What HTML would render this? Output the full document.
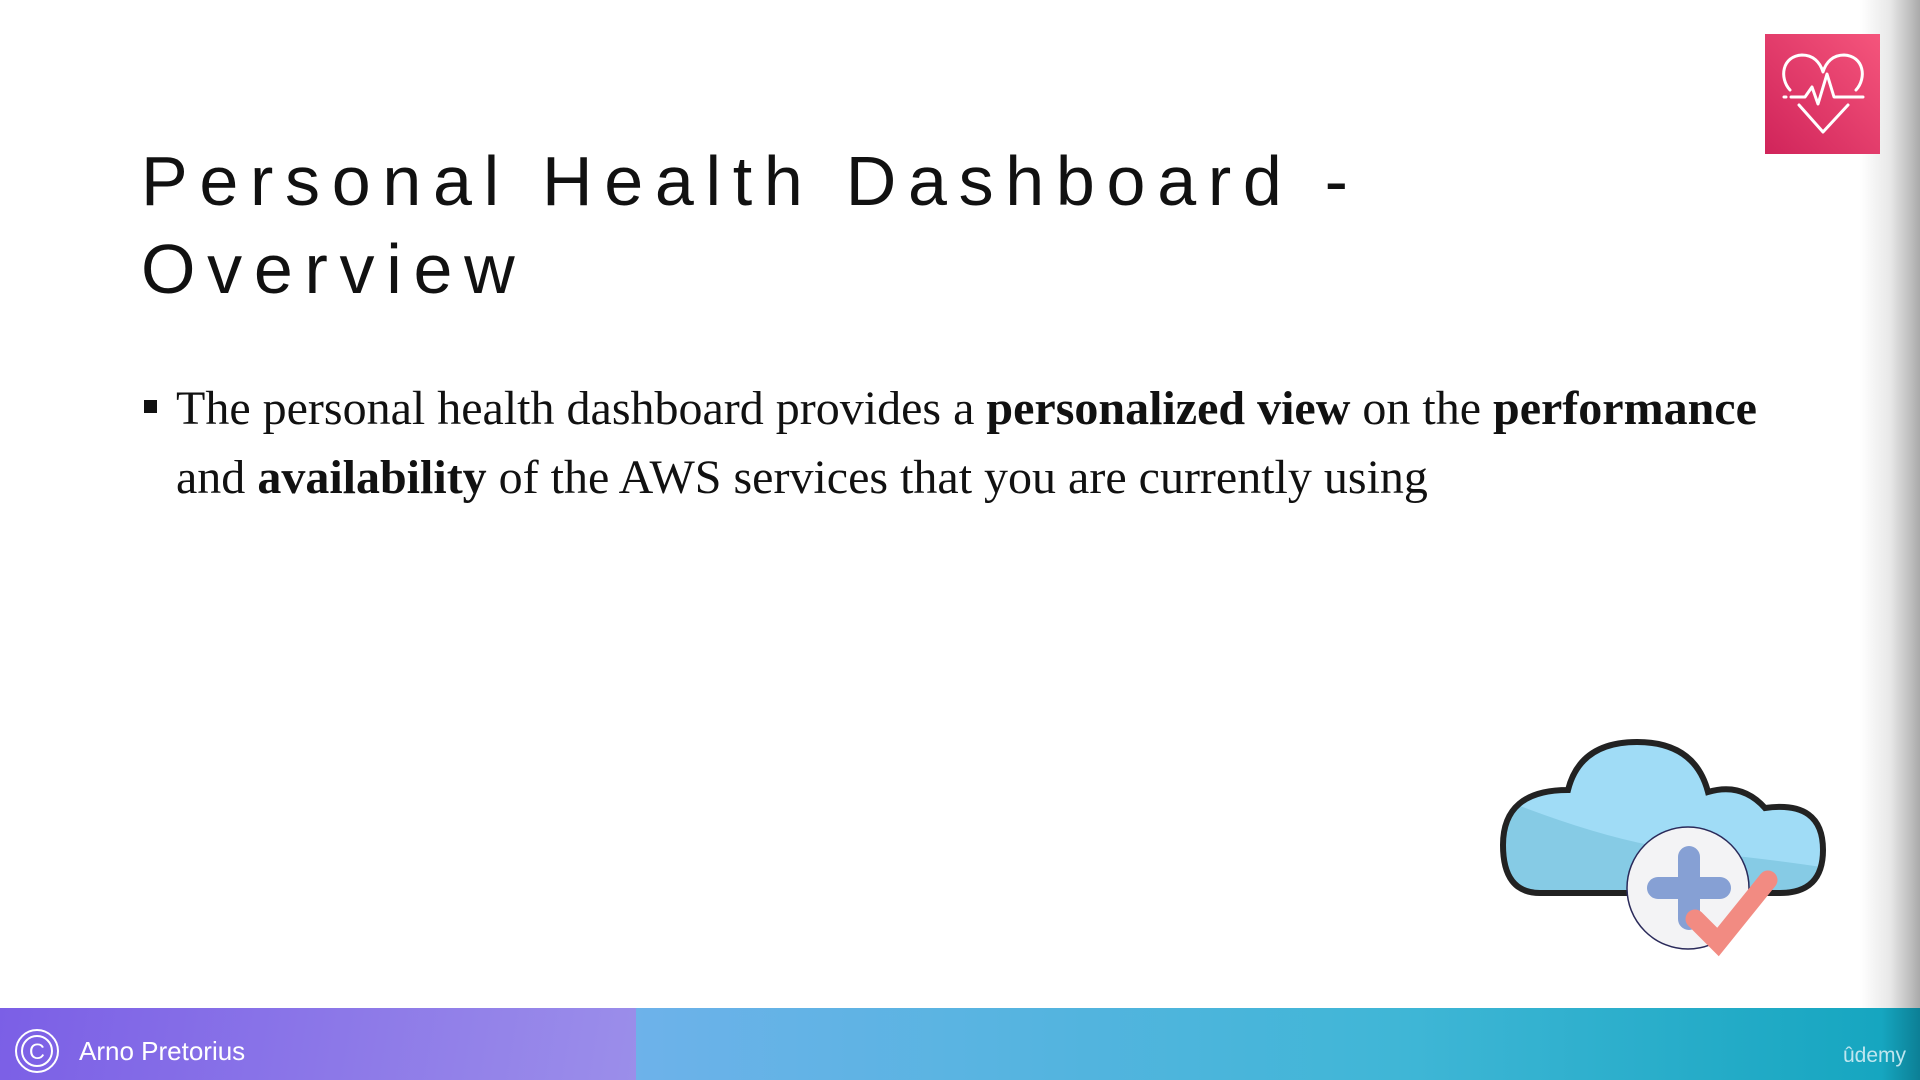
<!DOCTYPE html>
<html><head><meta charset="utf-8"><style>
html,body{margin:0;padding:0}
body{width:1920px;height:1080px;position:relative;overflow:hidden;background:#fff;font-family:"Liberation Sans",sans-serif}
.title{position:absolute;left:141px;top:137px;font-size:70px;letter-spacing:11.7px;line-height:88px;color:#111;white-space:nowrap}
.body{position:absolute;left:176px;top:374px;font-family:"Liberation Serif",serif;font-size:48px;line-height:69px;color:#111;width:1620px}
.bul{position:absolute;left:144px;top:400px;width:13px;height:13px;background:#111}
.shadow{position:absolute;right:0;top:0;width:60px;height:1008px;background:linear-gradient(90deg,rgba(255,255,255,0),#e8e8e8 50%,#aaa)}
.barl{position:absolute;left:0;top:1008px;width:636px;height:72px;background:linear-gradient(100deg,#7b5fe6,#9b8eea)}
.barr{position:absolute;left:636px;top:1008px;width:1284px;height:72px;background:linear-gradient(90deg,#6db2ea,#3fb6d6 60%,#16a6c0 97%,#0c7f95)}
.name{position:absolute;left:79px;top:1036px;color:#fff;font-size:26px}
.udemy{position:absolute;left:1843px;top:1044px;color:#bfe6ef;font-size:21px}
</style></head><body>
<div class="shadow"></div>
<div class="title">Personal Health Dashboard -<br>Overview</div>
<div class="bul"></div>
<div class="body">The personal health dashboard provides a <b>personalized view</b> on the <b>performance</b> and <b>availability</b> of the AWS services that you are currently using</div>

<svg style="position:absolute;left:1765px;top:34px" width="115" height="120" viewBox="0 0 115 120">
<defs><linearGradient id="g" x1="0" y1="1" x2="1" y2="0"><stop offset="0" stop-color="#d0245a"/><stop offset="1" stop-color="#f5557c"/></linearGradient></defs>
<rect width="115" height="120" fill="url(#g)"/>
<g fill="none" stroke="#fff" stroke-width="3" stroke-linecap="round" stroke-linejoin="round">
<path d="M25 56 C14 44 17 22 37 21 C48 21 55 28 58 38 C61 28 68 21 79 21 C99 22 102 44 91 56"/>
<path d="M34 71 L58 98 L83 71"/>
<path d="M26 63 H40 L47 53 L53 70 L62 40 L69 63 H98"/>
<path d="M19 63 H21"/>
</g></svg>

<svg style="position:absolute;left:1480px;top:720px" width="440" height="288" viewBox="0 0 440 288">
<defs><clipPath id="c"><path d="M60 173 Q23 173 23 125 Q23 70 88 70 Q100 22 157 22 Q215 22 228 72 Q262 62 285 88 Q343 80 343 130 Q343 173 300 173 Z"/></clipPath></defs>
<path d="M60 173 Q23 173 23 125 Q23 70 88 70 Q100 22 157 22 Q215 22 228 72 Q262 62 285 88 Q343 80 343 130 Q343 173 300 173 Z" fill="#a0dcf6"/>
<path clip-path="url(#c)" d="M0 70 Q120 120 200 130 Q300 140 360 150 V200 H0Z" fill="#86cbe5"/>
<path d="M60 173 Q23 173 23 125 Q23 70 88 70 Q100 22 157 22 Q215 22 228 72 Q262 62 285 88 Q343 80 343 130 Q343 173 300 173 Z" fill="none" stroke="#222" stroke-width="6"/>
<circle cx="208" cy="168" r="61" fill="#f3f3f5" stroke="#2a2a5a" stroke-width="1.5"/>
<path d="M209 137 V199 M178 168 H240" stroke="#86a0d4" stroke-width="22" stroke-linecap="round"/>
<path d="M215 199 L238 222 L288 160" fill="none" stroke="#f28b82" stroke-width="19" stroke-linecap="round"/>
</svg>

<div class="barl"></div><div class="barr"></div>
<svg style="position:absolute;left:14px;top:1028px" width="46" height="46" viewBox="0 0 46 46"><circle cx="23" cy="23" r="21" fill="none" stroke="#fff" stroke-width="2"/><circle cx="23" cy="23" r="15" fill="none" stroke="#fff" stroke-width="2"/><text x="23" y="31" text-anchor="middle" fill="#fff" font-size="22" font-family="Liberation Sans">C</text></svg>
<div class="name">Arno Pretorius</div>
<div class="udemy">ûdemy</div>
</body></html>
